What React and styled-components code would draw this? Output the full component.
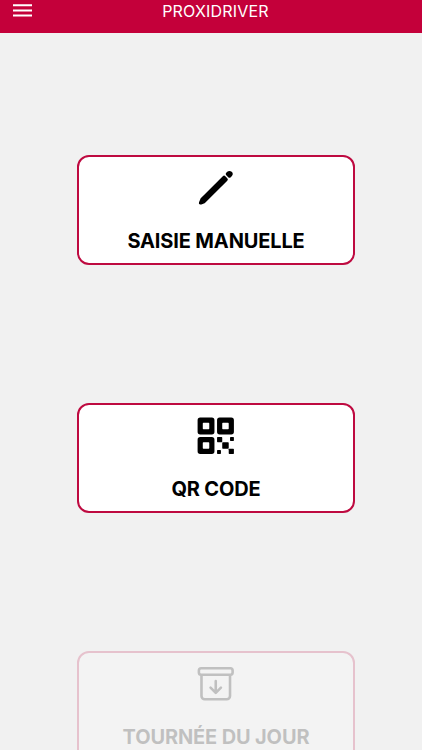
import React from 'react'
import styled, { createGlobalStyle } from 'styled-components'
import { IoPencil, IoQrCode, IoArchiveOutline } from 'react-icons/io5'

const actions = [
  { label: 'SAISIE MANUELLE', icon: IoPencil },
  { label: 'QR CODE', icon: IoQrCode },
  { label: 'TOURNÉE DU JOUR', icon: IoArchiveOutline, disabled: true },
]

export default function App() {
  return (
    <Screen>
      <GlobalStyle />
      <Header>
        <MenuButton aria-label="Menu">
          <svg viewBox="0 0 19 14">
            <path d="M0 1.2h19M0 6.4h19M0 11.5h19" />
          </svg>
        </MenuButton>
        <Title>PROXIDRIVER</Title>
      </Header>
      <Actions>
        {actions.map(({ label, icon: Icon, disabled }) => (
          <ActionButton key={label} disabled={disabled}>
            <Icon />
            <Label>{label}</Label>
          </ActionButton>
        ))}
      </Actions>
    </Screen>
  )
}

const GlobalStyle = createGlobalStyle`
  * {
    box-sizing: border-box;
  }
  body {
    margin: 0;
    overflow: hidden;
    background-color: #f1f1f1;
    font-family: Inter, 'Liberation Sans', sans-serif;
  }
`

const Screen = styled.div`
  display: flex;
  flex-direction: column;
  height: 750px;
  overflow: hidden;
`

const Header = styled.header`
  display: grid;
  grid-template-columns: 46px 1fr 37px;
  flex-shrink: 0;
  height: 33px;
  background-color: #c4003a;
`

const MenuButton = styled.button`
  display: flex;
  align-items: flex-start;
  padding: 4px 0 0 13.4px;
  border: 0;
  background: none;
  svg {
    width: 19px;
    height: 14px;
    fill: none;
    stroke: #fff;
    stroke-width: 2;
  }
`

const Title = styled.h1`
  margin: 0;
  padding-top: 1px;
  text-align: center;
  font-size: 16px;
  font-weight: 400;
  line-height: 21px;
  letter-spacing: 0.2px;
  color: #fff;
`

const Actions = styled.main`
  display: flex;
  flex-direction: column;
  gap: 138.2px;
  padding: 121.6px 67px 0 77px;
`

const ActionButton = styled.button`
  display: flex;
  flex-direction: column;
  align-items: center;
  flex-shrink: 0;
  height: 110px;
  padding: 10.2px 0 0;
  border: 2px solid #be0a40;
  border-radius: 12px;
  background-color: #fff;
  font-family: inherit;
  color: #000;
  &:disabled {
    opacity: 0.2;
  }
  svg {
    width: 41.5px;
    height: 41.5px;
    margin-right: 0.6px;
  }
`

const Label = styled.span`
  margin-top: 19.3px;
  font-size: 20px;
  font-weight: 650;
  line-height: 26px;
  letter-spacing: -0.14px;
  white-space: nowrap;
`
